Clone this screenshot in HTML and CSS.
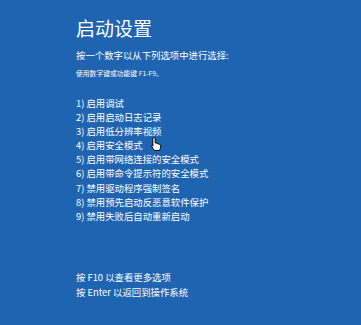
FILE: index.html
```html
<!DOCTYPE html>
<html lang="zh-CN">
<head>
    <meta charset="UTF-8">
    <title>启动设置</title>
    <link rel="stylesheet" href="styles.css">
</head>
<body>
    <div class="screen">
        <h1 class="title">启动设置</h1>
        <p class="prompt">按一个数字以从下列选项中进行选择:</p>
        <p class="hint">使用数字键或功能键 F1-F9。</p>
        <ul class="options">
            <li>1) 启用调试</li>
            <li>2) 启用启动日志记录</li>
            <li>3) 启用低分辨率视频</li>
            <li>4) 启用安全模式</li>
            <li>5) 启用带网络连接的安全模式</li>
            <li>6) 启用带命令提示符的安全模式</li>
            <li>7) 禁用驱动程序强制签名</li>
            <li>8) 禁用预先启动反恶意软件保护</li>
            <li>9) 禁用失败后自动重新启动</li>
        </ul>
        <div class="footer">
            <p>按 F10 以查看更多选项</p>
            <p>按 Enter 以返回到操作系统</p>
        </div>
    </div>
    <svg class="cursor" width="11" height="14" viewBox="0 0 11 14">
        <path d="M3 0.5 C3.8 0.5 4.2 1 4.2 1.8 L4.2 6 L5 5.8 C5.6 5.8 6 6.1 6 6.6 L6.8 6.5 C7.4 6.5 7.8 6.9 7.8 7.3 L8.5 7.3 C9.2 7.3 9.6 7.8 9.6 8.4 L9.6 10.5 C9.6 12 8.6 13.5 7 13.5 L4.5 13.5 C3.5 13.5 2.8 12.9 2.2 12 L0.7 9.3 C0.4 8.7 0.6 8.2 1.1 8 C1.6 7.8 2 8.1 2.3 8.5 L1.8 8.9 L1.8 1.8 C1.8 1 2.2 0.5 3 0.5 Z" fill="#fff" stroke="#000" stroke-width="1"/>
    </svg>
</body>
</html>
```

FILE: styles.css
```css
* {
    box-sizing: border-box;
    margin: 0;
    padding: 0;
}
html, body {
    height: 100%;
}
body {
    background-color: #1f64b0;
    color: #fff;
    font-family: "Microsoft YaHei", "Noto Sans CJK SC", "Noto Sans", sans-serif;
    position: relative;
    overflow: hidden;
}
.screen {
    padding: 16px 0 0 76px;
}
.title {
    font-size: 19px;
    font-weight: normal;
    line-height: 24px;
}
.prompt {
    margin-top: 8px;
    font-size: 9.4px;
    line-height: 14px;
}
.hint {
    margin-top: 6px;
    font-size: 6.8px;
    line-height: 10px;
}
.options {
    list-style: none;
    margin-top: 18px;
    font-size: 9.4px;
    line-height: 14.1px;
}
.footer {
    margin-top: 47px;
    font-size: 9.4px;
    line-height: 15px;
}
.cursor {
    position: absolute;
    left: 151px;
    top: 137px;
}
```
